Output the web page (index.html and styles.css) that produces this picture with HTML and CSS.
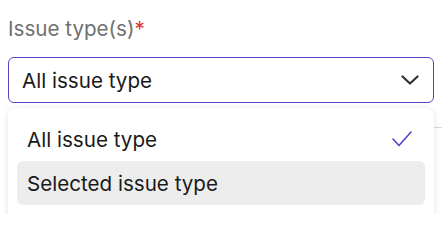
FILE: index.html
```html
<!DOCTYPE html>
<html>
<head>
<meta charset="utf-8">
<link rel="stylesheet" href="styles.css">
</head>
<body>
<div class="backdrop-line"></div>
<div class="field">
  <div class="label">Issue type(s)<span class="req">*</span></div>
  <div class="select">
    <span class="value">All issue type</span>
    <svg class="chevron" width="18" height="10" viewBox="0 0 18 10"><path d="M1.5 1.5 L9 8.5 L16.5 1.5" fill="none" stroke="#333" stroke-width="2.2" stroke-linecap="round" stroke-linejoin="round"/></svg>
  </div>
  <div class="menu">
    <div class="item">
      <span>All issue type</span>
      <svg class="check" width="20" height="16" viewBox="0 0 20 16"><path d="M1 8 L7 14.5 L19 1" fill="none" stroke="#5b3fc4" stroke-width="1.6" stroke-linecap="round" stroke-linejoin="round"/></svg>
    </div>
    <div class="item active"><span>Selected issue type</span></div>
  </div>
</div>
</body>
</html>
```
FILE: styles.css
```css
html, body {
  margin: 0;
  background: #fff;
}
body {
  padding: 8px;
  font-family: Inter, "Noto Sans", sans-serif;
  overflow: hidden;
  height: 214px;
  box-sizing: border-box;
}
.backdrop-line {
  position: absolute;
  left: 300px;
  right: 0;
  top: 127px;
  height: 1px;
  background: #dcdcdc;
}
.field {
  position: relative;
  width: 426px;
}
.label {
  font-size: 20.6px;
  line-height: 24px;
  color: #707070;
  padding-top: 9px;
  margin-bottom: 16px;
}
.req {
  color: #e0342f;
}
.select {
  height: 46px;
  box-sizing: border-box;
  border: 1px solid #5b3fc4;
  border-radius: 6px;
  display: flex;
  align-items: center;
  justify-content: space-between;
  padding: 0 14px 0 13px;
  font-size: 20.6px;
  color: #1a1a1a;
}
.chevron {
  display: block;
}
.menu {
  position: relative;
  z-index: 1;
  margin-top: 5px;
  background: #fff;
  border-radius: 8px;
  padding: 9px 9px 30px;
  box-shadow: 0 1px 6px rgba(0,0,0,0.12);
}
.item {
  height: 44px;
  border-radius: 6px;
  padding: 0 12px 0 10px;
  display: flex;
  align-items: center;
  justify-content: space-between;
  font-size: 20.6px;
  color: #1a1a1a;
}
.item.active {
  background: #ededed;
}
.check {
  display: block;
  margin-right: 1px;
}
```
